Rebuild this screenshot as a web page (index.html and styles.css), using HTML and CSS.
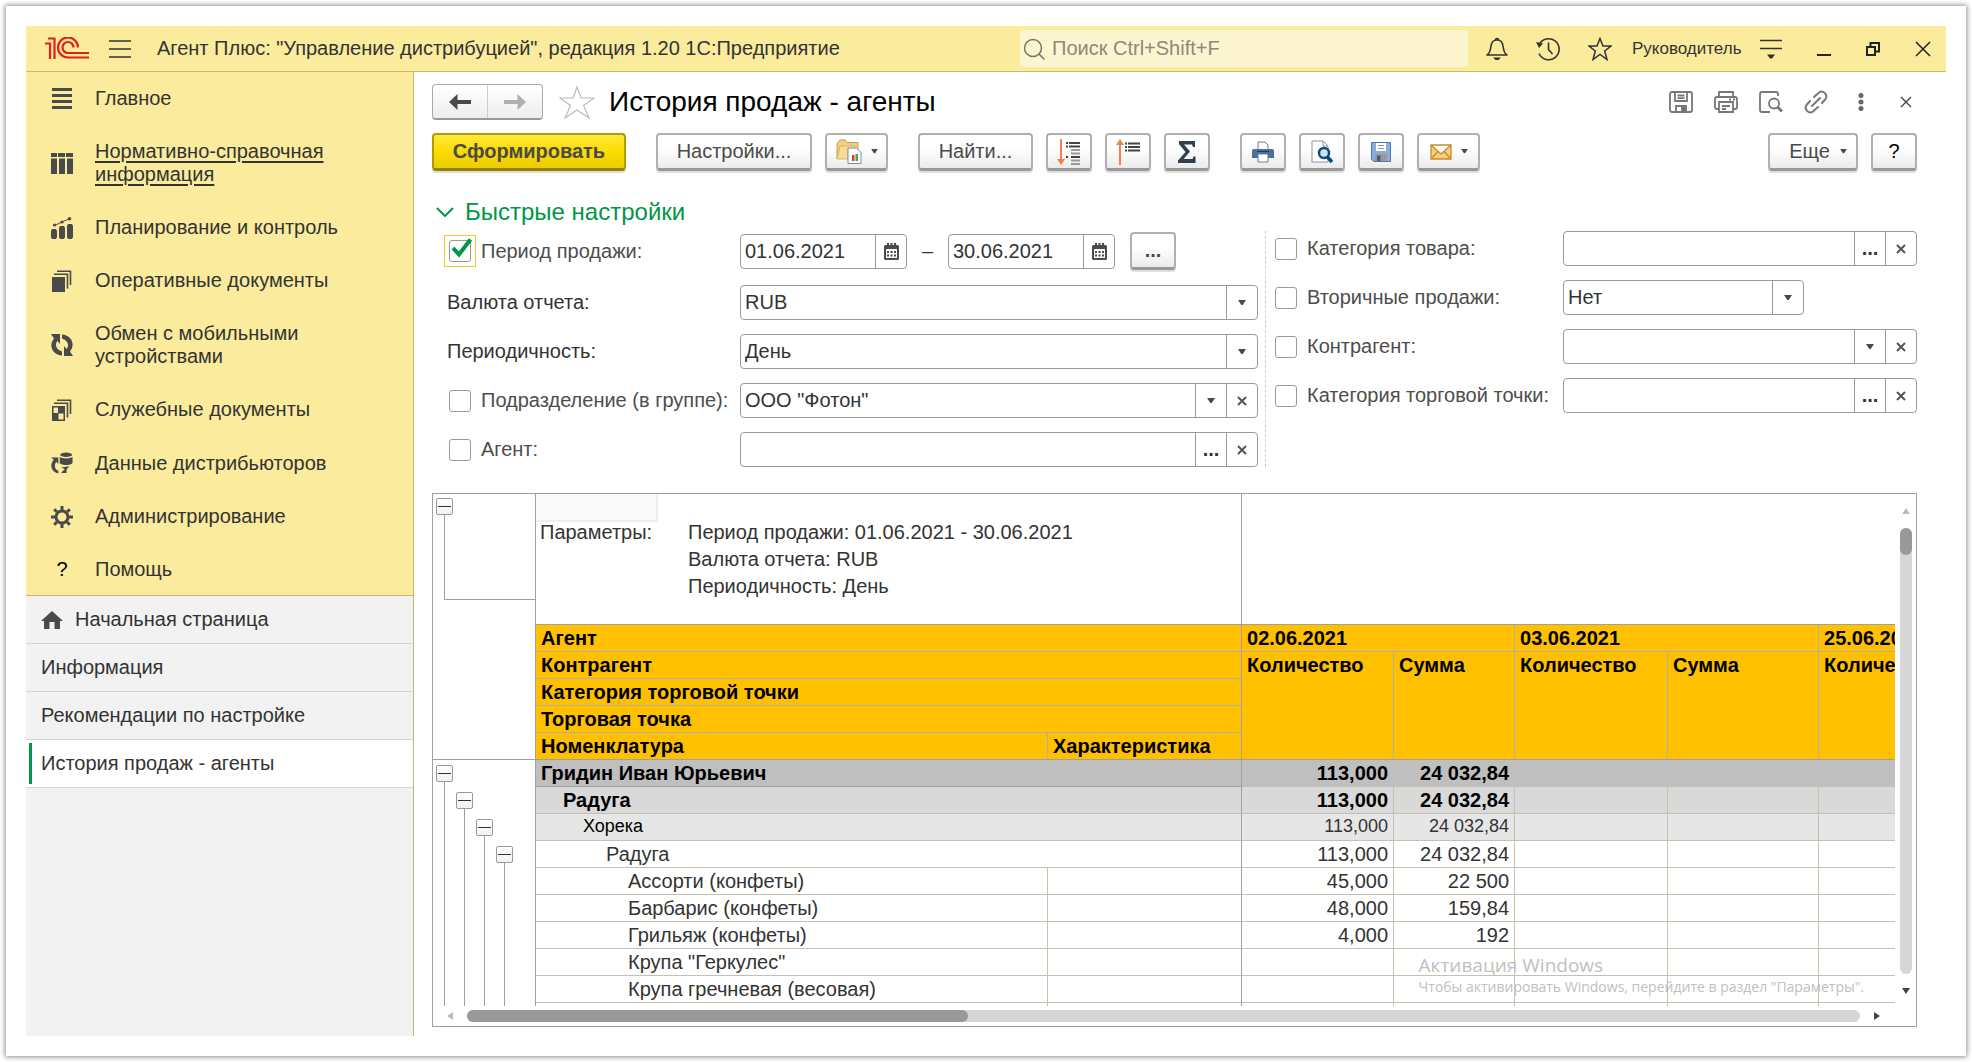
FILE: index.html
```html
<!DOCTYPE html>
<html lang="ru">
<head>
<meta charset="utf-8">
<meta name="viewport" content="width=device-width, initial-scale=1">
<title>История продаж - агенты</title>
<link rel="stylesheet" href="styles.css">
</head>
<body>
<svg class="sprite" aria-hidden="true">
  <symbol id="i-arrow" viewBox="0 0 8 6"><path d="M0 0H8L4.700 5H3.300Z"/></symbol>
  <symbol id="i-x" viewBox="0 0 10 10"><path d="M1 1L9 9M9 1L1 9"/></symbol>
  <symbol id="i-cal" viewBox="0 0 15 17"><path fill="#4a4a4a" fill-rule="evenodd" d="M1.500 2H3V0H5V2H6.500V0H8.500V2H10V0H12V2H13.500Q15 2 15 3.500V15.500Q15 17 13.500 17H1.500Q0 17 0 15.500V3.500Q0 2 1.500 2ZM2 6V15H13V6Z"/><path fill="#4a4a4a" d="M3 8h2v2H3zM6.500 8h2v2h-2zM10 8h2v2h-2zM3 11.500h2v2H3zM6.500 11.500h2v2h-2zM10 11.500h2v2h-2z"/></symbol>
</svg>

<div class="app">
  <header class="titlebar">
    <svg class="logo" width="44" height="23" viewBox="0 0 44 23" fill="none" stroke="#e0201b" stroke-width="2.200"><path d="M0 6.500H5V22M3 1.500H9.500V22"/><path d="M33 10.500A10 10 0 1 0 23 20.500H44M28.500 10.500A5.500 5.500 0 1 0 23 16H44"/></svg>
    <button class="plain" aria-label="Меню"><svg width="22" height="18" viewBox="0 0 22 18" stroke="#333" stroke-width="1.500"><path d="M0 1H22M0 9H22M0 17H22"/></svg></button>
    <span class="app-name">Агент Плюс: "Управление дистрибуцией", редакция 1.20 1С:Предприятие</span>
    <label class="search">
      <svg width="24" height="24" viewBox="0 0 24 24" fill="none" stroke="#77745f" stroke-width="1.500"><circle cx="11" cy="11" r="8.500"/><path d="M17 17L22.500 22.500"/></svg>
      <input type="search" placeholder="Поиск Ctrl+Shift+F" aria-label="Поиск">
    </label>
    <div class="tools">
      <button class="plain" aria-label="Оповещения"><svg width="22" height="24" viewBox="0 0 22 24" fill="none" stroke="#333" stroke-width="1.600"><path d="M1 18C4 16.500 4.500 13 5 9C5.500 5 8 3 11 3S16.500 5 17 9C17.500 13 18 16.500 21 18Z" stroke-linejoin="round"/><path d="M9.500 3a1.500 1.500 0 0 1 3 0"/><path d="M7 20.500H15L12.500 23H9.500Z" fill="#333" stroke="none"/></svg></button>
      <button class="plain" aria-label="История"><svg width="24" height="24" viewBox="0 0 24 24" fill="none" stroke="#333" stroke-width="1.600"><path d="M3 8A10.500 10.500 0 1 1 3 16.500M12.500 5.500V12.500L16.500 17"/><path d="M0 5L7 6.500L3 11Z" fill="#333" stroke="none"/></svg></button>
      <button class="plain" aria-label="Избранное"><svg width="24" height="24" viewBox="0 0 24 24" fill="none" stroke="#333" stroke-width="1.500"><path d="M12 1.500L15 9H23L16.700 14L19 22.500L12 17.500L5 22.500L7.300 14L1 9H9Z"/></svg></button>
    </div>
    <a class="user" href="#">Руководитель</a>
    <div class="win">
      <button class="plain" aria-label="Сервис"><svg width="22" height="20" viewBox="0 0 22 20"><path d="M0 1.500H22M0 9.500H22" stroke="#333" stroke-width="1.600"/><path d="M7 15.500H15L12 19.500H10Z" fill="#333"/></svg></button>
      <button class="plain" aria-label="Свернуть"><svg width="14" height="16" viewBox="0 0 14 16"><path d="M0 14H14" stroke="#222" stroke-width="2"/></svg></button>
      <button class="plain" aria-label="Восстановить"><svg width="14" height="14" viewBox="0 0 14 14" fill="none" stroke="#222" stroke-width="2"><path d="M1 5H9V13H1ZM4.500 5V1H13V9.500H9"/></svg></button>
      <button class="plain" aria-label="Закрыть"><svg width="16" height="16" viewBox="0 0 16 16" stroke="#222" stroke-width="1.500"><path d="M1 1L15 15M15 1L1 15"/></svg></button>
    </div>
  </header>

  <div class="body">
    <aside class="sidebar">
      <nav class="sections">
        <a href="#"><svg width="22" height="22" viewBox="0 0 22 22" fill="#4a4a4a"><path d="M1 0h20v3H1zM1 6h20v3H1zM1 12h20v3H1zM1 18h20v3H1z"/></svg><span>Главное</span></a>
        <a href="#" class="active"><svg width="22" height="22" viewBox="0 0 22 22" fill="#4a4a4a"><path d="M0 1H22V5H0zM0 6.500h6V22H0zM8 6.500h6V22H8zM16 6.500h6V22h-6z"/><path d="M6.500 1v4M14.500 1v4" stroke="#fbeb9d"/></svg><span>Нормативно-справочная информация</span></a>
        <a href="#"><svg width="22" height="22" viewBox="0 0 22 22" fill="#4a4a4a"><path d="M0 14l1-2h4l1 2v6l-1 2H1l-1-2zM8 11l1-2h4l1 2v9l-1 2H9l-1-2zM16 9l1-2h4l1 2v11l-1 2h-4l-1-2z"/><path d="M3.500 8.500L11 5L19 1.500" stroke="#4a4a4a" fill="none"/><circle cx="3.500" cy="8" r="1.600"/><circle cx="11" cy="5" r="1.600"/><circle cx="18.500" cy="1.800" r="1.800"/></svg><span>Планирование и контроль</span></a>
        <a href="#"><svg width="22" height="22" viewBox="0 0 22 22" fill="#4a4a4a"><path d="M1 7h13v15H1z"/><path d="M3 4.200h13.500V18.500M6 1.200h13.500V15" fill="none" stroke="#4a4a4a" stroke-width="1.600"/></svg><span>Оперативные документы</span></a>
        <a href="#"><svg width="22" height="22" viewBox="0 0 22 22" fill="#4a4a4a"><path d="M0 0H9V10L6.500 7C4 9.500 4 15 11 17.500V21.500C2 21 -3 12 3 4.500ZM22 22H13V12L15.500 15C18 12.500 18 7 11 4.500V.5C20 1 25 10 19 17.500Z"/></svg><span>Обмен с мобильными устройствами</span></a>
        <a href="#"><svg width="22" height="22" viewBox="0 0 22 22" fill="#4a4a4a"><path fill-rule="evenodd" d="M1 7h13v15H1zM2.500 8.500v5.500H7V8.500zM7.500 14.500V20.500H12.500V14.500z"/><path d="M3 4.200h13.500V18.500M6 1.200h13.500V15" fill="none" stroke="#4a4a4a" stroke-width="1.600"/></svg><span>Служебные документы</span></a>
        <a href="#"><svg width="24" height="24" viewBox="0 0 24 24" fill="#4a4a4a"><ellipse cx="16.500" cy="3" rx="6.500" ry="2.500"/><path d="M9.500 5.500C12 7.500 21 7.500 23.500 5.500V12C21 15 12 15 9.500 12Z"/><path d="M0 6H8V13L6 11C3 14 4 19 8 20.500V23.500C0 22 -2 14 3 8.500ZM11 17L20 15.500L17 19V23H11L15 18.500Z"/></svg><span>Данные дистрибьюторов</span></a>
        <a href="#"><svg width="22" height="22" viewBox="0 0 22 22" fill="none" stroke="#4a4a4a"><circle cx="11" cy="11" r="6" stroke-width="3"/><path d="M11 0V4M11 18V22M0 11H4M18 11H22M3.200 3.200L6 6M16 16L18.800 18.800M18.800 3.200L16 6M6 16L3.200 18.800" stroke-width="3"/></svg><span>Администрирование</span></a>
        <a href="#"><b class="q">?</b><span>Помощь</span></a>
      </nav>
      <nav class="windows">
        <a href="#"><svg width="22" height="18" viewBox="0 0 22 18" fill="#4a4a4a"><path d="M11 0L22 10H19V18H13.500V11H8.500V18H3V10H0Z"/></svg>Начальная страница</a>
        <a href="#">Информация</a>
        <a href="#">Рекомендации по настройке</a>
        <a href="#" class="current">История продаж - агенты</a>
      </nav>
    </aside>

    <main class="content">
      <div class="page-head">
        <div class="history">
          <button aria-label="Назад"><svg width="22" height="16" viewBox="0 0 22 16" fill="#4a4a4a"><path d="M0 8L8.500 0V6H22V10H8.500V16Z"/></svg></button>
          <button aria-label="Вперед"><svg width="22" height="16" viewBox="0 0 22 16" fill="#b0b0b0"><path d="M22 8L13.500 0V6H0V10H13.500V16Z"/></svg></button>
        </div>
        <button class="plain" aria-label="В избранное"><svg width="36" height="34" viewBox="0 0 36 34" fill="#fff" stroke="#b4bcc4" stroke-width="1.200"><path d="M18 2L22 13H35L24.500 20.500L30 33L18 25L6 33L11.500 20.500L1 13H14Z"/></svg></button>
        <h1>История продаж - агенты</h1>
        <div class="page-tools">
          <button class="plain" aria-label="Сохранить"><svg width="24" height="22" viewBox="0 0 24 22" fill="none" stroke="#777" stroke-width="1.800"><rect x="1" y="1" width="22" height="20" rx="2"/><path d="M6 1V10H18V1M8.500 4.500H15.500M8.500 7.200H15.500M7 21V15H17V21"/><path d="M13 16h3v4h-3z" fill="#666"/></svg></button>
          <button class="plain" aria-label="Печать"><svg width="24" height="22" viewBox="0 0 24 22" fill="none" stroke="#777" stroke-width="1.800"><path d="M5 6V1H19V6M5 18H3Q1 18 1 16V8Q1 6 3 6H21Q23 6 23 8V16Q23 18 21 18H19M5 11H19V21H5ZM8 15H16M8 18H12M15 8.500H17M19 8.500H21"/></svg></button>
          <button class="plain" aria-label="Просмотр"><svg width="24" height="22" viewBox="0 0 24 22" fill="none" stroke="#777" stroke-width="1.800"><path d="M11 21H3Q1 21 1 19V3Q1 1 3 1H17Q19 1 19 3V5"/><circle cx="15" cy="12.500" r="5"/><path d="M18.500 16L23 20.500" stroke-width="3"/></svg></button>
          <button class="plain" aria-label="Ссылка"><svg width="24" height="24" viewBox="0 0 24 24" fill="none" stroke="#777" stroke-width="2" stroke-linecap="round"><path d="M8 16L16 8M10 7L15 2.500C19 -.5 24.500 5 21.500 9L18 13M6 11L2.500 15C-.5 19 5 24.500 9 21.500L14 17"/></svg></button>
          <button class="plain" aria-label="Еще"><svg width="24" height="18" viewBox="0 0 24 18" fill="#666"><circle cx="12" cy="2.500" r="2.500"/><circle cx="12" cy="9" r="2.500"/><circle cx="12" cy="15.500" r="2.500"/></svg></button>
          <button class="plain" aria-label="Закрыть"><svg width="12" height="12" viewBox="0 0 12 12" stroke="#444" stroke-width="1.400"><path d="M1 1L11 11M11 1L1 11"/></svg></button>
        </div>
      </div>

      <div class="toolbar">
        <button class="btn primary">Сформировать</button>
        <div class="group">
          <button class="btn wide">Настройки...</button>
          <button class="btn drop" aria-label="Варианты отчета"><svg width="26" height="26" viewBox="0 0 26 26"><path d="M1 20V5L4 1H9L11 3.500H22V9" fill="#f3d07e" stroke="#c89a4b"/><path d="M1 20L4 7H22V11H12V20Z" fill="#f8dc95" stroke="#d9b165"/><path d="M12 9H20.500L25 13.500V24.500H12Z" fill="#fff" stroke="#7a8fa6"/><path d="M16 16h2.500v6H16z" fill="#e33"/><path d="M19.500 15H22v7h-2.500z" fill="#4a4"/></svg><svg class="caret" width="8" height="6"><use href="#i-arrow"/></svg></button>
        </div>
        <div class="group">
          <button class="btn find">Найти...</button>
          <button class="btn" aria-label="Развернуть"><svg width="24" height="26" viewBox="0 0 24 26"><path d="M4 0V20" stroke="#f0824a" stroke-width="2"/><path d="M0 20H8L4 26Z" fill="#f0824a"/><path d="M12 4H23M12 7.500H23M14 18H23" stroke="#444" stroke-width="2"/><path d="M14 11H23M14 14.500H23M14 21.500H23M14 25H23" stroke="#999" stroke-width="2"/><path d="M9 4h2M9 7.500h2M9 18h2" stroke="#444" stroke-width="2"/></svg></button>
          <button class="btn" aria-label="Свернуть группы"><svg width="24" height="26" viewBox="0 0 24 26"><path d="M4 6V26" stroke="#f0824a" stroke-width="2"/><path d="M0 6H8L4 0Z" fill="#f0824a"/><path d="M12 4.500H24M12 8H24M12 11.500H24M9 4.500h2M9 8h2M9 11.500h2" stroke="#444" stroke-width="2"/></svg></button>
          <button class="btn" aria-label="Сумма"><svg width="18" height="22" viewBox="0 0 18 22"><path d="M1 0H17V6H15L14 3.500H6L12 10.500L5.500 18H14.500L15.500 15.500H17.500V22H0V19.500L7.500 11L1 3Z" fill="#2d3f50"/></svg></button>
        </div>
        <div class="group">
          <button class="btn" aria-label="Печать"><svg width="22" height="22" viewBox="0 0 22 22"><path d="M6 9V1H13L16 4V9" fill="#fff" stroke="#667c96"/><path d="M2 8H20Q22 8 22 10V17H0V10Q0 8 2 8Z" fill="#4c6f9c"/><path d="M5 10.500H17" stroke="#1f3a5f"/><path d="M6 13H16V21H6Z" fill="#fff" stroke="#667c96"/></svg></button>
          <button class="btn" aria-label="Просмотр"><svg width="22" height="24" viewBox="0 0 22 24"><path d="M1 1H12L17 6V22H1Z" fill="#fff" stroke="#8595a8"/><path d="M12 1V6H17" fill="none" stroke="#8595a8"/><circle cx="13" cy="13" r="5" fill="#cfe6f7" stroke="#0e4a7d" stroke-width="2.500"/><path d="M16.500 17L21 22" stroke="#0e4a7d" stroke-width="3.500"/></svg></button>
          <button class="btn" aria-label="Сохранить"><svg width="20" height="20" viewBox="0 0 20 20"><path d="M.5 .5H19.500V19.500H3L.5 17.500Z" fill="#86aede" stroke="#5077a8"/><path d="M5 1H15V9H5Z" fill="#fff"/><path d="M7 3.500H13M7 6.500H13" stroke="#89a"/><path d="M4 12H16V19H4Z" fill="#999"/><path d="M6 13.500H9.500V19H6Z" fill="#4a5f7a"/></svg></button>
          <button class="btn drop" aria-label="Отправить"><svg width="22" height="16" viewBox="0 0 22 16" fill="#f6cf76" stroke="#c98a2d" stroke-width="1.300"><path d="M1 1H21V15H1ZM1 1L11 10L21 1M1 15L8 7.500M21 15L14 7.500"/></svg><svg class="caret" width="8" height="6"><use href="#i-arrow"/></svg></button>
        </div>
        <div class="group end">
          <button class="btn more">Еще<svg class="caret" width="8" height="6"><use href="#i-arrow"/></svg></button>
          <button class="btn help">?</button>
        </div>
      </div>

      <h2 class="quick"><svg width="18" height="10" viewBox="0 0 18 10" fill="none" stroke="#009646" stroke-width="2"><path d="M1 1L9 9L17 1"/></svg>Быстрые настройки</h2>

      <form class="filters">
        <div class="left">
          <div class="row period">
            <div class="cap"><span class="tick focus"><input type="checkbox" id="f-period" checked><svg width="22" height="20" viewBox="0 0 22 20" fill="none" stroke="#009646" stroke-width="4"><path d="M2 10L8 16.500L19.500 1.500"/></svg></span><label for="f-period">Период продажи:</label></div>
            <div class="dates">
              <div class="field date"><input type="text" value="01.06.2021" aria-label="Начало периода"><button type="button" aria-label="Календарь"><svg width="15" height="17"><use href="#i-cal"/></svg></button></div>
              <span class="dash">–</span>
              <div class="field date"><input type="text" value="30.06.2021" aria-label="Конец периода"><button type="button" aria-label="Календарь"><svg width="15" height="17"><use href="#i-cal"/></svg></button></div>
              <button type="button" class="btn dots">...</button>
            </div>
          </div>
          <div class="row">
            <div class="cap solid"><label for="f-cur">Валюта отчета:</label></div>
            <div class="field combo"><select id="f-cur"><option>RUB</option></select><span class="arrow"><svg width="8" height="6"><use href="#i-arrow"/></svg></span></div>
          </div>
          <div class="row">
            <div class="cap solid"><label for="f-per">Периодичность:</label></div>
            <div class="field combo"><select id="f-per"><option>День</option></select><span class="arrow"><svg width="8" height="6"><use href="#i-arrow"/></svg></span></div>
          </div>
          <div class="row">
            <div class="cap"><span class="tick"><input type="checkbox" id="f-dep"></span><label for="f-dep">Подразделение (в группе):</label></div>
            <div class="field combo"><select aria-label="Подразделение"><option>ООО "Фотон"</option></select><span class="arrow"><svg width="8" height="6"><use href="#i-arrow"/></svg></span><button type="button" aria-label="Очистить"><svg class="x" width="10" height="10"><use href="#i-x"/></svg></button></div>
          </div>
          <div class="row">
            <div class="cap"><span class="tick"><input type="checkbox" id="f-agent"></span><label for="f-agent">Агент:</label></div>
            <div class="field"><input type="text" aria-label="Агент"><button type="button">...</button><button type="button" aria-label="Очистить"><svg class="x" width="10" height="10"><use href="#i-x"/></svg></button></div>
          </div>
        </div>
        <div class="right">
          <div class="row">
            <div class="cap"><span class="tick"><input type="checkbox" id="f-cat"></span><label for="f-cat">Категория товара:</label></div>
            <div class="field"><input type="text" aria-label="Категория товара"><button type="button">...</button><button type="button" aria-label="Очистить"><svg class="x" width="10" height="10"><use href="#i-x"/></svg></button></div>
          </div>
          <div class="row">
            <div class="cap"><span class="tick"><input type="checkbox" id="f-sec"></span><label for="f-sec">Вторичные продажи:</label></div>
            <div class="field combo short"><select aria-label="Вторичные продажи"><option>Нет</option></select><span class="arrow"><svg width="8" height="6"><use href="#i-arrow"/></svg></span></div>
          </div>
          <div class="row">
            <div class="cap"><span class="tick"><input type="checkbox" id="f-con"></span><label for="f-con">Контрагент:</label></div>
            <div class="field combo"><select aria-label="Контрагент"><option></option></select><span class="arrow"><svg width="8" height="6"><use href="#i-arrow"/></svg></span><button type="button" aria-label="Очистить"><svg class="x" width="10" height="10"><use href="#i-x"/></svg></button></div>
          </div>
          <div class="row">
            <div class="cap"><span class="tick"><input type="checkbox" id="f-pt"></span><label for="f-pt">Категория торговой точки:</label></div>
            <div class="field"><input type="text" aria-label="Категория торговой точки"><button type="button">...</button><button type="button" aria-label="Очистить"><svg class="x" width="10" height="10"><use href="#i-x"/></svg></button></div>
          </div>
        </div>
      </form>

      <section class="report">
        <div class="outline">
          <div class="outline-top"><div class="lvl"><button class="fold" aria-label="Свернуть"></button><i class="hook"></i></div></div>
          <div class="outline-rows">
            <div class="lvl"><button class="fold" aria-label="Свернуть"></button><i></i></div>
            <div class="lvl l2"><button class="fold" aria-label="Свернуть"></button><i></i></div>
            <div class="lvl l3"><button class="fold" aria-label="Свернуть"></button><i></i></div>
            <div class="lvl l4"><button class="fold" aria-label="Свернуть"></button><i></i></div>
          </div>
        </div>
        <div class="sheet">
          <table>
            <colgroup><col class="c-name"><col class="c-char"><col class="c-q1"><col class="c-s1"><col class="c-q2"><col class="c-s2"><col class="c-q3"></colgroup>
            <thead>
              <tr class="params">
                <td colspan="2"><div class="cell-cursor"></div>
                  <dl><dt>Параметры:</dt><dd>Период продажи: 01.06.2021 - 30.06.2021</dd><dd>Валюта отчета: RUB</dd><dd>Периодичность: День</dd></dl></td>
                <td colspan="5"></td>
              </tr>
              <tr><th colspan="2">Агент</th><th colspan="2">02.06.2021</th><th colspan="2">03.06.2021</th><th>25.06.2021</th></tr>
              <tr><th colspan="2">Контрагент</th><th rowspan="4">Количество</th><th rowspan="4">Сумма</th><th rowspan="4">Количество</th><th rowspan="4">Сумма</th><th rowspan="4">Количество</th></tr>
              <tr><th colspan="2">Категория торговой точки</th></tr>
              <tr><th colspan="2">Торговая точка</th></tr>
              <tr class="last"><th>Номенклатура</th><th>Характеристика</th></tr>
            </thead>
            <tbody>
              <tr class="g1"><td colspan="2">Гридин Иван Юрьевич</td><td>113,000</td><td>24 032,84</td><td></td><td></td><td></td></tr>
              <tr class="g2"><td colspan="2">Радуга</td><td>113,000</td><td>24 032,84</td><td></td><td></td><td></td></tr>
              <tr class="g3"><td colspan="2">Хорека</td><td>113,000</td><td>24 032,84</td><td></td><td></td><td></td></tr>
              <tr class="g4"><td colspan="2">Радуга</td><td>113,000</td><td>24 032,84</td><td></td><td></td><td></td></tr>
              <tr class="item"><td>Ассорти (конфеты)</td><td></td><td>45,000</td><td>22 500</td><td></td><td></td><td></td></tr>
              <tr class="item"><td>Барбарис (конфеты)</td><td></td><td>48,000</td><td>159,84</td><td></td><td></td><td></td></tr>
              <tr class="item"><td>Грильяж (конфеты)</td><td></td><td>4,000</td><td>192</td><td></td><td></td><td></td></tr>
              <tr class="item"><td>Крупа "Геркулес"</td><td></td><td></td><td></td><td></td><td></td><td></td></tr>
              <tr class="item"><td>Крупа гречневая (весовая)</td><td></td><td></td><td></td><td></td><td></td><td></td></tr>
              <tr class="item tail"><td></td><td></td><td></td><td></td><td></td><td></td><td></td></tr>
            </tbody>
          </table>
        </div>
        <div class="vbar"><svg width="8" height="6" viewBox="0 0 8 6" fill="#bbb"><path d="M0 6L4 0L8 6Z"/></svg><div class="track"><div class="thumb"></div></div><svg width="8" height="6" viewBox="0 0 8 6" fill="#444"><path d="M0 0H8L4 6Z"/></svg></div>
        <div class="hbar"><svg width="6" height="8" viewBox="0 0 6 8" fill="#bbb"><path d="M6 0V8L0 4Z"/></svg><div class="track"><div class="thumb"></div></div><svg width="6" height="8" viewBox="0 0 6 8" fill="#444"><path d="M0 0V8L6 4Z"/></svg></div>
        <div class="watermark"><p class="big">Активация Windows</p><p>Чтобы активировать Windows, перейдите в раздел "Параметры".</p></div>
      </section>
    </main>
  </div>
</div>
</body>
</html>
```
FILE: styles.css
```css
* { box-sizing: border-box; }

body {
  margin: 0;
  padding: 6px;
  min-height: 100vh;
  display: flex;
  background: #fff;
  color: #333;
  font: 20px/23px "Liberation Sans", Arial, sans-serif;
}

button, input, select { font: inherit; color: inherit; }
button { padding: 0; }
svg { display: block; flex: none; }
a { color: inherit; text-decoration: none; }
h1, h2, p, dl, dd { margin: 0; font-weight: normal; }

.sprite { position: absolute; width: 0; height: 0; }

.app {
  flex: 1;
  min-width: 0;
  display: flex;
  flex-direction: column;
  border: 20px solid #fff;
  box-shadow: 0 0 5px 1px rgba(0, 0, 0, .45);
}

.plain { border: 0; background: none; display: flex; }

/* title bar */
.titlebar {
  height: 46px;
  display: flex;
  align-items: center;
  padding: 0 15px 0 19px;
  background: #fbeb9d;
  border-bottom: 1px solid #c6b96a;
}
.titlebar .logo { margin-right: 20px; }
.app-name { margin: 0 16px 0 26px; flex: 1; white-space: nowrap; }
.search {
  width: 448px;
  height: 37px;
  display: flex;
  align-items: center;
  gap: 6px;
  padding-left: 2px;
  border-radius: 3px;
  background: #fdf5cf;
}
.search input { flex: 1; min-width: 0; padding: 0; border: 0; outline: 0; background: none; }
.search input::placeholder { color: #8d8a78; opacity: 1; }
.tools { display: flex; align-items: center; gap: 28px; margin: 0 20px 0 18px; }
.user { font-size: 17px; width: 108px; white-space: nowrap; }
.win { display: flex; align-items: center; gap: 35px; margin-left: 20px; }

/* left panel */
.body { flex: 1; display: flex; }
.sidebar {
  flex: 0 0 388px;
  background: #f2f2f2;
  border-right: 1px solid #c6b96a;
}
.sections { background: #fbeb9d; border-bottom: 1px solid #c6b96a; }
.sections a { display: flex; align-items: center; padding: 15px 60px 15px 25px; }
.sections a:last-child { padding-bottom: 14px; }
.sections svg, .q { width: 22px; margin-right: 22px; }
.q { font-weight: normal; color: #000; text-align: center; }
.sections .active { text-decoration: underline; text-underline-offset: 3px; }
.windows a {
  height: 48px;
  display: flex;
  align-items: center;
  gap: 12px;
  padding-left: 15px;
  border-bottom: 1px solid #d4d4d4;
}
.windows .current { padding-left: 3px; gap: 9px; background: #fff; }
.windows .current::before { content: ""; width: 3px; height: 41px; background: #009646; }

/* page */
.content {
  flex: 1;
  min-width: 0;
  display: flex;
  flex-direction: column;
  padding: 12px 29px 9px 18px;
  background: #fff;
}
.page-head { display: flex; align-items: center; height: 36px; margin-bottom: 13px; }
.history {
  display: flex;
  width: 111px;
  height: 36px;
  margin-right: 16px;
  border: 1px solid #aaa;
  border-bottom: 2px solid #999;
  border-radius: 4px;
  background: linear-gradient(#fff, #eee);
}
.history button { flex: 1; display: flex; align-items: center; justify-content: center; border: 0; background: none; }
.history button + button { border-left: 1px solid #ccc; }
h1 { flex: 1; margin-left: 14px; font-size: 28px; line-height: 32px; color: #000; }
.page-tools { display: flex; align-items: center; gap: 21px; margin-right: 5px; }
.page-tools button:last-child { margin-left: 6px; }

.btn {
  width: 46px;
  height: 38px;
  display: flex;
  align-items: center;
  justify-content: center;
  border: 2px solid #b0b0b0;
  border-bottom: 3px solid #999;
  border-radius: 4px;
  background: linear-gradient(#fff 40%, #ebebeb);
  box-shadow: 0 2px 1px #ddd;
  color: #4a4a4a;
}
.toolbar { display: flex; gap: 30px; margin-bottom: 28px; }
.group { display: flex; gap: 13px; }
.end { margin-left: auto; }
.primary {
  width: 194px;
  font-weight: bold;
  border-color: #b09c00;
  border-bottom-color: #938300;
  background: linear-gradient(#ffe93e, #fbdc00 50%, #eccd00);
}
.wide { width: 156px; }
.drop { width: 63px; gap: 9px; }
.find { width: 115px; }
.more { width: 90px; gap: 10px; padding-left: 10px; }
.help { color: #000; }
.caret { width: 7px; height: 5px; }
.caret, .arrow svg { fill: #4a4a4a; }
.x { fill: none; stroke: #555; stroke-width: 2; }

.quick {
  display: flex;
  align-items: center;
  gap: 11px;
  padding-left: 4px;
  margin-bottom: 6px;
  font-size: 24px;
  line-height: 26px;
  color: #009646;
}

/* filters */
.filters { display: flex; gap: 7px; margin-bottom: 26px; }
.left, .right { display: flex; flex-direction: column; gap: 14px; min-width: 0; }
.left { flex: 826 1 0; }
.right { flex: 642 1 0; padding-left: 9px; border-left: 1px dashed #ccc; }
.row { display: flex; align-items: center; height: 35px; }
.period { height: 40px; }
.cap { display: flex; align-items: center; gap: 5px; color: #4d4d4d; white-space: nowrap; }
.left .cap { flex: 0 0 308px; padding-left: 12px; }
.left .solid { padding-left: 15px; color: #333; }
.right .cap { flex: 0 0 288px; gap: 10px; }
.tick { position: relative; display: flex; }
.left .tick { padding: 4px; border: 1px solid transparent; }
.left .focus { border-color: #f7c520; }
.tick input {
  appearance: none;
  width: 22px;
  height: 22px;
  margin: 0;
  border: 1px solid #999;
  border-radius: 3px;
  background: #fff;
}
.tick svg { position: absolute; left: 6px; top: 2px; pointer-events: none; }

.field {
  flex: 1;
  min-width: 0;
  height: 35px;
  display: flex;
  border: 1px solid #999;
  border-radius: 4px;
  background: #fff;
  overflow: hidden;
}
.field input, .field select {
  flex: 1;
  min-width: 0;
  padding: 0 0 0 4px;
  border: 0;
  outline: 0;
  background: none;
  appearance: none;
}
.field button, .arrow {
  flex: 0 0 31px;
  display: flex;
  align-items: center;
  justify-content: center;
  border: 0;
  border-left: 1px solid #999;
  background: none;
  font-weight: bold;
}
.combo select { margin-right: -31px; padding-right: 35px; }
.arrow { pointer-events: none; }
.short { flex: 0 0 241px; }
.dates { flex: 1; display: flex; align-items: center; }
.date { flex: 0 0 167px; }
.dash { width: 41px; text-align: center; }
.dots { height: 38px; margin-left: 15px; font-weight: bold; }

/* report */
.report {
  position: relative;
  flex: 1;
  display: grid;
  grid-template: 1fr 20px / 103px 1fr 21px;
  border: 1px solid #a0a0a0;
}
.outline { display: flex; flex-direction: column; border-right: 1px solid #a0a0a0; }
.outline-top { height: 266px; padding: 4px 0 0 3px; border-bottom: 1px solid #a0a0a0; }
.outline-top .lvl { width: 100%; height: 102px; }
.outline-rows { flex: 1; display: flex; gap: 3px; padding: 5px 0 0 3px; }
.lvl { width: 17px; display: flex; flex-direction: column; }
.l2 { padding-top: 27px; }
.l3 { padding-top: 54px; }
.l4 { padding-top: 81px; }
.lvl i { flex: 1; margin-left: 8px; border-left: 1px solid #a0a0a0; }
.lvl .hook { border-bottom: 1px solid #a0a0a0; }
.fold {
  flex: none;
  width: 17px;
  height: 17px;
  border: 1px solid #999;
  border-radius: 2px;
  background: linear-gradient(#333, #333) center / 13px 1px no-repeat, linear-gradient(#fff, #f2f2f2);
}

.sheet { min-width: 0; overflow: hidden; }
table { width: 1435px; table-layout: fixed; border-collapse: separate; border-spacing: 0; }
.c-name { width: 512px; }
.c-char { width: 194px; }
.c-q1, .c-q3 { width: 152px; }
.c-s1 { width: 121px; }
.c-q2 { width: 153px; }
.c-s2 { width: 151px; }
th, td {
  height: 27px;
  padding: 1px 5px 0;
  line-height: 25px;
  text-align: left;
  vertical-align: top;
  white-space: nowrap;
  overflow: hidden;
  border: 0 solid #c8bfae;
  border-width: 0 1px 1px 0;
}
th { background: #ffc000; color: #000; border-color: #b0b0a8; }
.last th, th[rowspan] { border-bottom-color: #a0a0a0; }
.params td { height: 131px; padding: 0; border-color: #a0a0a0; }
.cell-cursor { width: 122px; height: 28px; background: #f9f9f9; border: solid #eee; border-width: 0 2px 2px 0; }
dl { display: grid; grid-template-columns: 148px 1fr; grid-auto-rows: 27px; padding-left: 4px; height: 103px; margin-top: -3px; line-height: 27px; }
dd { grid-column: 2; }
td[colspan="2"], th[colspan="2"]:first-child, .last th:last-child, .item td:nth-child(2) { border-right-color: #a0a0a0; }
tbody td:nth-last-child(-n+5) { text-align: right; }
.g1 td { background: #bfbfbf; border-right-color: #bfbfbf; font-weight: bold; color: #000; }
.g1 td:first-child { border-right-color: #a0a0a0; border-bottom-color: #a0a0a0; }
.g2 td { background: #d9d9d9; font-weight: bold; color: #000; }
.g2 td:first-child { padding-left: 27px; }
.g3 td { background: #e6e6e6; font-size: 18px; line-height: 23px; }
.g3 td:first-child { padding-left: 47px; color: #000; }
.g4 td:first-child { padding-left: 70px; }
.item td:first-child { padding-left: 92px; }
.tail td { height: 3px; padding: 0; border-bottom: 0; line-height: 3px; }

.vbar, .hbar { display: flex; align-items: center; }
.vbar { flex-direction: column; justify-content: space-between; padding: 14px 0 12px; grid-column: 3; }
.hbar { grid-column: 1 / 4; gap: 14px; padding: 0 36px 0 14px; }
.track { border-radius: 6px; background: #d6d6d6; }
.vbar .track { flex: 1; width: 12px; margin: 14px 0; }
.hbar .track { flex: 1; height: 12px; }
.thumb { border-radius: 6px; background: #999; }
.vbar .thumb { height: 27px; }
.hbar .thumb { width: 36%; height: 12px; }

.watermark {
  position: absolute;
  right: 52px;
  bottom: 28px;
  font: 14px/22px "Open Sans", "Noto Sans", sans-serif;
  color: #c0c0c0;
  pointer-events: none;
}
.watermark .big { font-size: 19px; }
```
